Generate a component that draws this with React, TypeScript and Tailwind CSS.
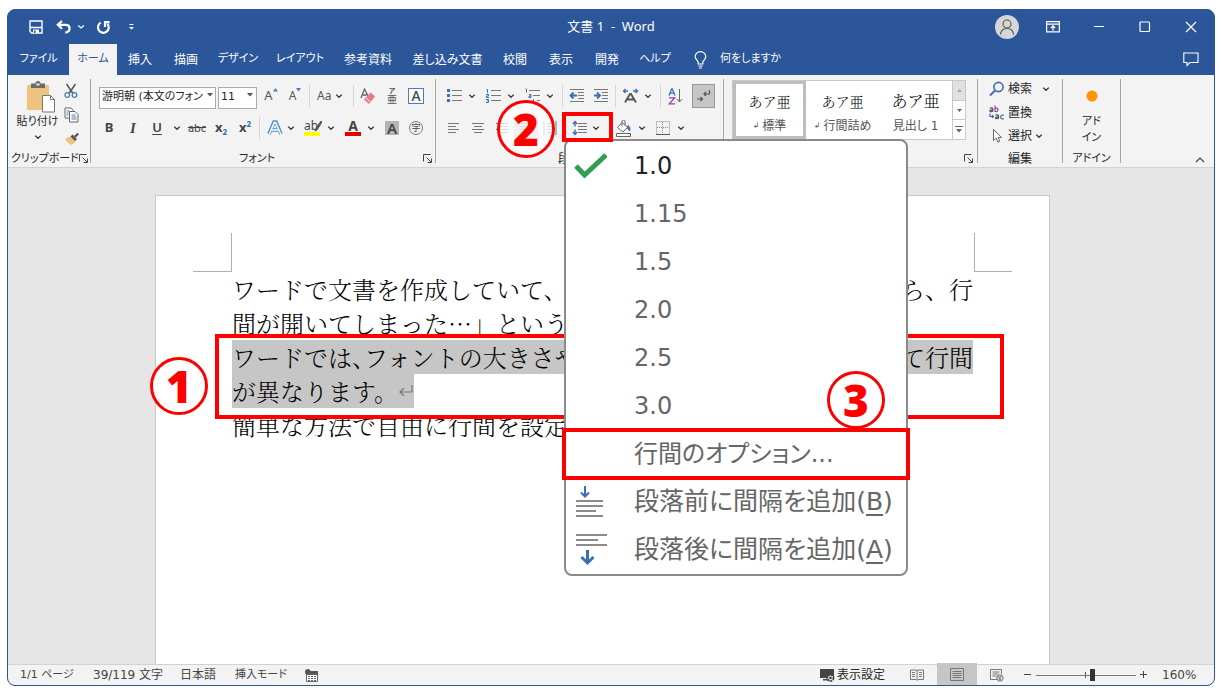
import type { ReactNode } from "react";

const UI = "font-['DejaVu_Sans','Noto_Sans_CJK_JP',sans-serif] [font-feature-settings:'palt']";
const TITLE = "font-['Noto_Sans','Noto_Sans_CJK_JP',sans-serif]";

const Chevron = () => (
  <svg width="8" height="8" viewBox="0 0 8 8" fill="none" stroke="#333" strokeWidth="1.3" className="shrink-0">
    <path d="M1.2 2.6 4 5.3 6.8 2.6" />
  </svg>
);

const Divider = () => <div className="mx-[2px] h-[22px] w-px shrink-0 bg-[#d5d5d5]" />;

const GroupLine = () => <div className="my-1 w-px shrink-0 bg-[#a6a6a6]" />;

type BtnProps = { label: string; className?: string; children: ReactNode };

const Tool = ({ label, className = "w-6", children }: BtnProps) => (
  <button type="button" aria-label={label} className={`flex h-6 shrink-0 items-center justify-center ${className}`}>
    {children}
  </button>
);

const Split = ({ label, className = "", children }: BtnProps) => (
  <button type="button" aria-label={label} className={`flex h-6 shrink-0 items-center ${className}`}>
    {children}
    <Chevron />
  </button>
);

const Launcher = ({ label }: { label: string }) => (
  <button type="button" aria-label={label} className="flex h-4 w-[10px] shrink-0 items-center justify-center">
    <svg width="10" height="10" viewBox="0 0 10 10" fill="none" stroke="#444" strokeWidth="1">
      <path d="M.5 7.5V.5h7M3.5 3.5l5 5M8.5 4.5v4h-4" />
    </svg>
  </button>
);

const Lines = ({ rows }: { rows: [number, number][] }) => (
  <svg width="14" height="14" viewBox="0 0 14 14" stroke="#777" strokeWidth="1">
    {rows.map(([a, b], i) => (
      <path key={i} d={`M${a} ${2.5 + i * 3}H${b}`} />
    ))}
  </svg>
);

const tabs: { name: string; w: string; on?: boolean }[] = [
  { name: "ファイル", w: "w-[61px] text-[11px]" },
  { name: "ホーム", w: "w-[48px] text-[11px]", on: true },
  { name: "挿入", w: "w-[46px] text-xs" },
  { name: "描画", w: "w-[46px] text-xs" },
  { name: "デザイン", w: "w-[58px] text-[11px]" },
  { name: "レイアウト", w: "w-[66px] text-[11px]" },
  { name: "参考資料", w: "w-[70px] text-xs" },
  { name: "差し込み文書", w: "w-[89px] text-xs" },
  { name: "校閲", w: "w-[46px] text-xs" },
  { name: "表示", w: "w-[46px] text-xs" },
  { name: "開発", w: "w-[46px] text-xs" },
  { name: "ヘルプ", w: "w-[50px] text-[11px]" },
];

function TitleBar() {
  return (
    <header className={`flex h-[34px] shrink-0 items-center text-[13px] text-white ${TITLE}`}>
      <div className="flex flex-1 items-center">
        <Tool label="上書き保存" className="ml-[18px] w-[20px]">
          <svg width="14" height="14" viewBox="0 0 14 14" fill="none" stroke="#fff" strokeWidth="1.4">
            <path d="M1 1h12v12H2.5L1 11.5z" />
            <path d="M1 7.5h12" />
            <path d="M4 9.5h6V13H4z" fill="#fff" stroke="none" />
            <path d="M5 10.5h1.5V13H5z" fill="#2b579a" stroke="none" />
          </svg>
        </Tool>
        <button type="button" aria-label="元に戻す" className="ml-[10px] flex h-6 items-center gap-[5px]">
          <svg width="16" height="14" viewBox="0 0 16 14" fill="none" stroke="#fff" strokeWidth="2.2">
            <path d="M6 1 1.8 4.8 6 8.8" />
            <path d="M2 4.8h8.2a3.6 3.6 0 0 1 3.4 3.6c0 2-1.6 3.6-4.4 4.2" />
          </svg>
          <svg width="8" height="8" viewBox="0 0 8 8" fill="none" stroke="#fff" strokeWidth="1.2">
            <path d="M1.2 2.5 4 5l2.8-2.5" />
          </svg>
        </button>
        <Tool label="繰り返し" className="ml-[8px] w-[20px]">
          <svg width="15" height="15" viewBox="0 0 15 15" fill="none" stroke="#fff" strokeWidth="2.2">
            <path d="M8 2.2H13.6" />
            <path d="M9 1v6" />
            <path d="M4.8 2.6a5.4 5.4 0 1 0 6.6 1.2" />
          </svg>
        </Tool>
        <Tool label="カスタマイズ" className="ml-[12px] w-[12px]">
          <svg width="7" height="8" viewBox="0 0 7 8" fill="#fff">
            <path d="M1.5 1h4v1h-4zM1 4h5L3.5 6.6z" />
          </svg>
        </Tool>
      </div>
      <h1 className="whitespace-pre">文書 1  -  Word</h1>
      <div className="flex flex-1 items-center justify-end">
        <Tool label="アカウント" className="w-[46px]">
          <svg width="24" height="24" viewBox="0 0 24 24" fill="none" stroke="#555" strokeWidth="1.1">
            <circle cx="12" cy="12" r="12" fill="#d6d6d6" stroke="none" />
            <circle cx="12" cy="9" r="4" />
            <path d="M5.5 19.5c.4-4 3-6 6.500-6s6.100 2 6.500 6" />
          </svg>
        </Tool>
        <Tool label="リボンの表示オプション" className="w-[46px]">
          <svg width="14" height="12" viewBox="0 0 14 12" fill="none" stroke="#fff" strokeWidth="1.2">
            <path d="M.6.6h12.800v10.300H.6zM.6 3.200h12.800M7 9.800V5M4.800 7 7 4.900 9.200 7" />
          </svg>
        </Tool>
        <Tool label="最小化" className="w-[46px]">
          <svg width="12" height="12" stroke="#fff"><path d="M1 5.500h10" /></svg>
        </Tool>
        <Tool label="最大化" className="w-[46px]">
          <svg width="12" height="12" fill="none" stroke="#fff" strokeWidth="1.2"><rect x="1" y="1" width="9.500" height="9.500" rx="1" /></svg>
        </Tool>
        <Tool label="閉じる" className="w-[46px]">
          <svg width="12" height="12" stroke="#fff" strokeWidth="1.2"><path d="m1 1 10 10M11 1 1 11" /></svg>
        </Tool>
      </div>
    </header>
  );
}

function TabBar() {
  return (
    <nav className="flex h-[31px] shrink-0 text-xs text-white">
      {tabs.map((t) => (
        <button
          key={t.name}
          type="button"
          className={`${t.w} shrink-0 whitespace-nowrap ${t.on ? "bg-[#f3f3f3] text-[#2b579a]" : ""}`}
        >
          {t.name}
        </button>
      ))}
      <button type="button" className="ml-[14px] flex shrink-0 items-center gap-[13px] whitespace-nowrap">
        <svg width="13" height="18" viewBox="0 0 13 18" fill="none" stroke="#fff" strokeWidth="1.2">
          <path d="M4.200 13v-1.500C4.200 9.500 1.200 8.500 1.200 5.600a5.300 5 0 0 1 10.600 0c0 2.900-3 3.900-3 5.900V13zM4.400 15h4.200M5 17h3" />
        </svg>
        <span className="text-[11px]">何をしますか</span>
      </button>
      <div className="flex-1" />
      <Tool label="コメント" className="w-[46px] self-center">
        <svg width="16" height="15" viewBox="0 0 16 15" fill="none" stroke="#fff" strokeWidth="1.1">
          <path d="M.8 1h14.200v9.500H7l-3 3v-3H.8z" />
        </svg>
      </Tool>
    </nav>
  );
}

function ClipboardGroup() {
  return (
    <section className="flex w-[82px] shrink-0 flex-col">
      <div className="flex h-[68px] pt-1 pl-[8px]">
        <button type="button" className="flex w-[43px] flex-col items-center pt-[2px] text-[11px] leading-4 whitespace-nowrap">
          <svg width="30" height="32" viewBox="0 0 30 32" className="ml-[6px]">
            <rect x="1" y="4" width="22" height="25" rx="1" fill="#ecc480" />
            <path d="M5 2.500h4.500a2.500 2.500 0 0 1 5 0H19V7H5z" fill="#6b6b6b" />
            <rect x="10.500" y="2.500" width="3" height="2" fill="#f3f3f3" />
            <path d="M16.500 14.500h8l4 4V31h-12z" fill="#fff" stroke="#777" />
            <path d="M24.500 14.500v4h4" fill="none" stroke="#777" />
          </svg>
          <span className="mt-[1px]">貼り付け</span>
          <span className="mt-[3px]"><Chevron /></span>
        </button>
        <div className="flex w-[24px] flex-col items-center">
          <Tool label="切り取り" className="w-6">
            <svg width="14" height="16" viewBox="0 0 14 16" fill="none">
              <path d="M2.500 1 9 10.500M11.500 1 5 10.500" stroke="#555" strokeWidth="1.500" />
              <circle cx="3.300" cy="12" r="2.300" stroke="#4a7ebb" strokeWidth="1.300" />
              <circle cx="10.500" cy="12" r="2.300" stroke="#4a7ebb" strokeWidth="1.300" />
            </svg>
          </Tool>
          <Tool label="コピー" className="w-6">
            <svg width="15" height="16" viewBox="0 0 15 16" fill="#fff" stroke="#666">
              <path d="M1 1h6l2.500 2.500V11H1z" />
              <path d="M5.500 4.500h5.500l3 3v7.500H5.500z" />
              <path d="M2.500 4h3M2.500 6h2M2.500 8h2M7.500 8h4M7.500 10h5M7.500 12h5" stroke="#4a7ebb" />
            </svg>
          </Tool>
          <Tool label="書式のコピー" className="w-6">
            <svg width="15" height="14" viewBox="0 0 15 14">
              <path d="m1 7 6-3 5 5-4 4C5 12 2.500 10 1 7z" fill="#ecc480" />
              <path d="M6.500 4.500 8.500 2.500 13 7l-2 2z" fill="#555" />
              <path d="m10 4 3.500-3.200L15 2.300 11.800 5.500z" fill="#555" />
            </svg>
          </Tool>
        </div>
      </div>
      <div className="flex h-6 items-start justify-between pt-2 pr-[2px] pl-[3px] text-[11px] leading-4 whitespace-nowrap">
        クリップボード
        <Launcher label="クリップボードの詳細" />
      </div>
    </section>
  );
}

function FontGroup() {
  return (
    <section className="flex w-[344px] shrink-0 flex-col pt-1">
      <div className="flex h-[34px] items-center pl-2">
        <div className="relative w-[117px]">
          <select aria-label="フォント名" className="h-[22px] w-full appearance-none border border-[#ababab] bg-white pr-[8px] pl-[2px] text-[11px]">
            <option>游明朝 (本文のフォン</option>
          </select>
          <svg width="6" height="4" className="pointer-events-none absolute top-[10px] right-[3px]"><path d="M0 0h6L3 3.500z" fill="#555" /></svg>
        </div>
        <div className="relative ml-[2px] w-[39px]">
          <select aria-label="フォント サイズ" className="h-[22px] w-full appearance-none border border-[#ababab] bg-white pl-[2px] text-[11px]">
            <option>11</option>
          </select>
          <svg width="6" height="4" className="pointer-events-none absolute top-[10px] right-[4px]"><path d="M0 0h6L3 3.500z" fill="#555" /></svg>
        </div>
        <div className="w-[2px]" />
        <Tool label="フォント サイズの拡大">
          <span className="font-['Noto_Sans'] text-[13px] text-[#555]">A</span>
          <svg width="5" height="4" className="mb-[12px]"><path d="M0 3.500h5L2.500 0z" fill="#4a7ebb" /></svg>
        </Tool>
        <Tool label="フォント サイズの縮小">
          <span className="font-['Noto_Sans'] text-xs text-[#555]">A</span>
          <svg width="5" height="4" className="mb-[12px]"><path d="M0 0h5L2.500 3.500z" fill="#4a7ebb" /></svg>
        </Tool>
        <Divider />
        <Split label="文字種の変換" className="w-[39px] gap-[4px] pl-[5px] font-['Noto_Sans'] text-xs text-[#555]">Aa</Split>
        <Divider />
        <Tool label="書式のクリア">
          <svg width="16" height="17" viewBox="0 0 16 17">
            <path d="M1 10 4.500 1 8 8M2.200 7h4.500" fill="none" stroke="#666" strokeWidth="1.300" />
            <path d="m10.500 4.500 4.500 4-6 7.500-5-4.500z" fill="#e8798c" />
            <path d="m5.500 9.500 5 4.500" stroke="#f3f3f3" />
          </svg>
        </Tool>
        <Tool label="ルビ">
          <span className="flex flex-col items-center text-[#555]">
            <span className="text-[7px] leading-[7px] font-bold">ア</span>
            <span className="text-[10px] leading-[10px]">亜</span>
          </span>
        </Tool>
        <Tool label="囲み線">
          <span className="flex h-4 w-4 items-center justify-center border border-[#4a7ebb] bg-white font-['Noto_Sans'] text-sm font-medium text-[#444]">A</span>
        </Tool>
      </div>
      <div className="flex h-[30px] items-center pl-[6px] font-['Noto_Sans','Noto_Sans_CJK_JP',sans-serif] text-[13px] text-[#444]">
        <Tool label="太字"><b>B</b></Tool>
        <Tool label="斜体"><i className="font-['Liberation_Serif'] text-[15px] font-bold">I</i></Tool>
        <Tool label="下線"><span className="font-semibold underline underline-offset-2">U</span></Tool>
        <Tool label="下線の種類" className="w-4"><Chevron /></Tool>
        <Tool label="取り消し線"><s className="text-[11px]">abc</s></Tool>
        <Tool label="下付き"><b>x</b><span className="mt-[8px] text-[8px] font-bold text-[#2e75b6]">2</span></Tool>
        <Tool label="上付き"><b>x</b><span className="mb-[8px] text-[8px] font-bold text-[#2e75b6]">2</span></Tool>
        <Divider />
        <Split label="文字の効果" className="w-[38px] gap-[4px] pl-[5px]">
          <svg width="16" height="16" viewBox="0 0 16 16">
            <path d="M2 14 7 2h2l5 12M4.500 10h7" fill="none" stroke="#4a90d9" strokeWidth="3.600" />
            <path d="M2.300 14 7.300 2.500h1.400l5 11.500M4.800 10h6.500" fill="none" stroke="#fff" strokeWidth="1.500" />
          </svg>
        </Split>
        <Split label="蛍光ペンの色" className="w-[40px] gap-[5px] pl-[4px]">
          <span className="flex w-[18px] flex-col">
            <span className="flex h-3 items-center text-xs leading-3 text-[#444]">
              ab
              <svg width="8" height="12" viewBox="0 0 8 12" className="-ml-[4px] shrink-0"><path d="m1 11 1-3L7 1l1 1-5 8z" fill="#555" stroke="#555" /></svg>
            </span>
            <span className="h-[4px] w-4 bg-[#ffff00]" />
          </span>
        </Split>
        <Split label="フォントの色" className="w-[40px] gap-[5px] pl-[4px]">
          <span className="flex w-[18px] flex-col items-center">
            <b className="h-3 text-[14px] leading-3">A</b>
            <span className="h-[4px] w-4 bg-[#e60000]" />
          </span>
        </Split>
        <Tool label="文字の網かけ"><span className="flex h-[14px] w-[14px] items-center justify-center bg-[#b5b5b5] text-[15px] font-semibold">A</span></Tool>
        <Tool label="囲い文字"><span className="flex h-[14px] w-[14px] items-center justify-center rounded-full border border-[#777] text-[9px]">字</span></Tool>
      </div>
      <div className="flex h-6 items-start pt-2 pr-[2px] text-[11px] leading-4">
        <span className="flex-1 text-center">フォント</span>
        <Launcher label="フォントの詳細" />
      </div>
    </section>
  );
}

function ParagraphGroup() {
  return (
    <section className="flex w-[287px] shrink-0 flex-col pt-1">
      <div className="flex h-[34px] items-center pl-[8px]">
        <Split label="箇条書き" className="w-[39px] gap-[5px] pl-[3px]">
          <svg width="16" height="16" viewBox="0 0 16 16">
            <path d="M5 2.500h10M5 7.500h10M5 12.500h10" stroke="#777" />
            <path d="M0 1h3v3H0zM0 6h3v3H0zM0 11h3v3H0z" fill="#3a70b2" />
          </svg>
        </Split>
        <Split label="段落番号" className="w-[39px] gap-[5px] pl-[3px]">
          <svg width="16" height="16" viewBox="0 0 16 16" fill="none">
            <path d="M5 2.500h10M5 7.500h10M5 12.500h10" stroke="#777" />
            <path d="M.5 1.500h1V5M0 6.500h2.500V8H.5v1.500H3M0 11.500h2.500v3H0M1 13h1" stroke="#3a70b2" />
          </svg>
        </Split>
        <Split label="アウトライン" className="w-[38px] gap-[5px] pl-[3px]">
          <svg width="16" height="16" viewBox="0 0 16 16" fill="none">
            <path d="M4 2.500h11M8 7.500h7M12 12.500h3" stroke="#777" />
            <path d="M.5 1h1v3.500M4 6.500h2v3H4V8h2M8.500 11v3.500" stroke="#3a70b2" />
          </svg>
        </Split>
        <Divider />
        <Tool label="インデントを減らす">
          <svg width="16" height="14" viewBox="0 0 16 14" fill="none">
            <path d="M1 .5h14M9 3.500h6M9 6.500h6M9 9.500h6M1 12.500h14" stroke="#777" />
            <path d="M8 6.500H2M4.500 3.500l-3 3 3 3" stroke="#3a70b2" strokeWidth="1.800" />
          </svg>
        </Tool>
        <Tool label="インデントを増やす">
          <svg width="16" height="14" viewBox="0 0 16 14" fill="none">
            <path d="M1 .5h14M9 3.500h6M9 6.500h6M9 9.500h6M1 12.500h14" stroke="#777" />
            <path d="M1 6.500h6M4 3.500l3 3-3 3" stroke="#3a70b2" strokeWidth="1.800" />
          </svg>
        </Tool>
        <Divider />
        <Split label="拡張書式" className="w-[40px] gap-[5px] pl-[4px]">
          <svg width="17" height="16" viewBox="0 0 17 16" fill="none">
            <path d="M3 14.500 8 6h1l5 8.500M5 11.500h7" stroke="#555" strokeWidth="1.800" />
            <path d="M6 3H1.500M3.500 1l-2 2 2 2M11 3h4.500M13.500 1l2 2-2 2" stroke="#3a70b2" strokeWidth="1.300" />
          </svg>
        </Split>
        <Divider />
        <Tool label="並べ替え">
          <span className="flex items-center">
            <svg width="8" height="17" viewBox="0 0 8 17" fill="none" strokeWidth="1.300">
              <path d="M1 7.500 3.700.8h.6L7 7.500M2 5.200h4" stroke="#3a70b2" />
              <path d="M1 9.800h5.800L1.200 15.800H7" stroke="#8e44ad" />
            </svg>
            <svg width="7" height="14" viewBox="0 0 7 14" fill="none" stroke="#666"><path d="M3.500 0v13M.8 10l2.700 3 2.700-3" /></svg>
          </span>
        </Tool>
        <Tool label="編集記号の表示" className="ml-[5px] w-[23px] border border-[#999] bg-[#c6c6c6]">
          <svg width="15" height="14" viewBox="0 0 15 14" fill="none" stroke="#555" strokeWidth="1.200">
            <path d="M13.500 1v4H8M10 3 8 5l2 2M1 10h5.500M4.500 8l2 2-2 2" />
          </svg>
        </Tool>
      </div>
      <div className="flex h-[30px] items-center pl-[6px]">
        <Tool label="左揃え"><Lines rows={[[1, 12], [1, 9], [1, 12], [1, 9]]} /></Tool>
        <Tool label="中央揃え"><Lines rows={[[1, 13], [3, 11], [1, 13], [3, 11]]} /></Tool>
        <Tool label="右揃え"><Lines rows={[[1, 13], [5, 13], [1, 13], [5, 13]]} /></Tool>
        <Tool label="両端揃え" className="w-6 bg-[#c6c6c6]"><Lines rows={[[1, 13], [1, 13], [1, 13], [1, 13]]} /></Tool>
        <Tool label="均等割り付け">
          <svg width="14" height="16" viewBox="0 0 14 16" stroke="#4a7ebb" fill="none">
            <path d="M1 1v14M13 1v14" /><path d="M4 3.500h7M4 6.500h7M4 9.500h7M4 12.500h7" stroke="#777" />
          </svg>
        </Tool>
        <Split label="行と段落の間隔" className="w-[46px] gap-[4px] pl-[10px]">
          <svg width="16" height="16" viewBox="0 0 16 16" fill="none">
            <path d="M6 3.500h9M6 6.500h9M6 9.500h9M6 12.500h9" stroke="#777" />
            <path d="M3 1.500v5M3 9.500v5M.8 4 3 1.500 5.200 4M.8 12 3 14.500 5.200 12" stroke="#3a70b2" strokeWidth="1.400" />
          </svg>
        </Split>
        <Split label="塗りつぶし" className="w-[40px] gap-[5px] pl-[7px]">
          <svg width="18" height="17" viewBox="0 0 18 17" fill="none" stroke="#666">
            <path d="m7 2.500 5.500 5L8 12 2.500 7.500z" fill="#fff" /><path d="M7 6V1.500a1.500 1.500 0 0 1 3 0V5" />
            <path d="M13 5.500c2 1.500 2.500 3 1.500 5.500l-2-3z" fill="#3a70b2" stroke="#3a70b2" />
            <path d="M1.500 13.500h14v3h-14z" fill="#fff" />
          </svg>
        </Split>
        <Split label="罫線" className="w-[40px] gap-[7px] pl-[8px]">
          <svg width="14" height="14" viewBox="0 0 14 14" fill="none" stroke="#888" strokeDasharray="1 1">
            <path d="M.5.5h13v13H.5zM6.500 1v12M1 6.500h12" /><path d="M0 13.500h14" stroke="#555" strokeDasharray="none" />
          </svg>
        </Split>
      </div>
      <div className="h-6 pt-2 pl-[122px] text-xs leading-4">段落</div>
    </section>
  );
}

function StylesGroup() {
  return (
    <section className="flex w-[253px] shrink-0 flex-col pt-[5px]">
      <div className="ml-2 flex h-[60px] w-[234px] border border-[#c8c8c8] bg-white whitespace-nowrap text-[#555]">
        {[
          { name: "標準", mark: "↲", on: true, cls: "text-[14px]" },
          { name: "行間詰め", mark: "↲", on: false, cls: "text-[14px]" },
          { name: "見出し 1", mark: "", on: false, cls: "text-[16px]" },
        ].map((s) => (
          <button
            key={s.name}
            type="button"
            className={`flex w-[73px] shrink-0 flex-col items-center justify-center gap-[7px] border-3 pt-1 ${s.on ? "border-[#bdbdbd]" : "border-transparent"}`}
          >
            <span className={`h-5 leading-5 font-light text-black font-['Noto_Serif_CJK_JP','Noto_Sans_CJK_JP',serif] [font-feature-settings:normal] ${s.cls}`}>あア亜</span>
            <span className="flex items-center gap-[3px] text-xs leading-4">
              {s.mark && <span className="text-[8px]">{s.mark}</span>}
              {s.name}
            </span>
          </button>
        ))}
        <div className="flex flex-1 flex-col border-l border-[#c8c8c8]">
          <button type="button" aria-label="前のスタイル" className="flex flex-1 items-center justify-center bg-[#e1e1e1]">
            <svg width="5" height="3"><path d="M0 3h5L2.500 0z" fill="#aaa" /></svg>
          </button>
          <button type="button" aria-label="次のスタイル" className="flex flex-1 items-center justify-center border-y border-[#c8c8c8]">
            <svg width="5" height="3"><path d="M0 0h5L2.500 3z" fill="#666" /></svg>
          </button>
          <button type="button" aria-label="その他のスタイル" className="flex flex-1 items-center justify-center">
            <svg width="8" height="7"><path d="M0 0h8v1H0zM1 3h6L4 6.500z" fill="#666" /></svg>
          </button>
        </div>
      </div>
      <div className="mt-[3px] flex h-6 justify-end pt-2 pr-[3px]">
        <Launcher label="スタイルの詳細" />
      </div>
    </section>
  );
}

function EditingGroup() {
  return (
    <section className="flex w-[84px] shrink-0 flex-col pt-[2px] text-xs">
      <button type="button" className="flex h-6 items-center gap-[3px] pl-[11px] leading-4">
        <svg width="16" height="16" viewBox="0 0 16 16" fill="none" stroke="#3a70b2" strokeWidth="1.600">
          <circle cx="9.500" cy="6" r="4.600" /><path d="M6 9.500 1 14.500" strokeWidth="2" />
        </svg>
        検索
        <span className="ml-[7px]"><Chevron /></span>
      </button>
      <button type="button" className="flex h-6 items-center gap-[3px] pl-[11px] leading-4">
        <svg width="16" height="16" viewBox="0 0 16 16" fill="none" strokeWidth="1.200">
          <path d="M.8 3.300c1-.7 3-.5 3 .8v2.700M3.800 5C2 4.800.8 5 .8 6s2 1 3-.3" stroke="#555" />
          <path d="M6 .5v6.300M6 4c.5-1.300 3-1.300 3 .8S6.500 7.200 6 6" stroke="#8e44ad" />
          <path d="M1 8.500v3h3M3 10l1.500 1.500L3 13" stroke="#3a70b2" />
          <path d="M6.500 10.300c1-.7 3-.5 3 .8v2.700M9.500 12c-1.800-.2-3 0-3 1s2 1 3-.3" stroke="#555" />
          <path d="M14.800 10.400c-1.200-.8-3.200-.2-3.200 1.600s2 2.400 3.200 1.500" stroke="#3a70b2" />
        </svg>
        置換
      </button>
      <button type="button" className="flex h-[22px] items-center gap-[3px] pl-[11px] leading-4">
        <svg width="16" height="16" viewBox="0 0 16 16" fill="#fff" stroke="#666">
          <path d="M4.500 1.500v11l2.600-2.400 1.700 4 2-.9-1.700-3.800h3.400z" />
        </svg>
        選択
        <Chevron />
      </button>
      <div className="pt-1 text-center leading-4">編集</div>
    </section>
  );
}

function AddInGroup() {
  return (
    <section className="flex w-[57px] shrink-0 flex-col text-[11px]">
      <button type="button" className="flex h-[76px] flex-col items-center pt-[15px] leading-4">
        <svg width="12" height="12"><circle cx="6" cy="6" r="5.500" fill="#ff9208" /></svg>
        <span className="mt-[12px]">アド</span>
        <span>イン</span>
      </button>
      <div className="text-center leading-4">アドイン</div>
    </section>
  );
}

function Ribbon() {
  return (
    <div className="flex h-[93px] shrink-0 border-b border-[#d2d2d2] bg-[#f3f3f3] text-[#262626]">
      <ClipboardGroup />
      <GroupLine />
      <FontGroup />
      <GroupLine />
      <ParagraphGroup />
      <GroupLine />
      <StylesGroup />
      <GroupLine />
      <EditingGroup />
      <GroupLine />
      <AddInGroup />
      <GroupLine />
      <div className="flex flex-1 items-end justify-end pr-[8px]">
        <Tool label="リボンを折りたたむ" className="w-3">
          <svg width="10" height="8" fill="none" stroke="#444" strokeWidth="1.200" className="mt-[10px]"><path d="M1 6 5 2l4 4" /></svg>
        </Tool>
      </div>
    </div>
  );
}

function Document() {
  return (
    <main className="flex min-h-0 flex-1 justify-center overflow-hidden bg-[#e6e6e6] pt-[27px] pr-[17px]">
      <article className="w-[895px] border border-b-0 border-[#c8c8c8] bg-white pt-[37px]">
        <div className="flex justify-between px-[37px]">
          <div className="h-[39px] w-[39px] border-r border-b border-[#b0b0b0]" />
          <div className="h-[39px] w-[38px] border-b border-l border-[#b0b0b0]" />
        </div>
        <div className="px-[76px] font-['Noto_Serif_CJK_JP','Noto_Sans_CJK_JP',serif] text-2xl leading-[34px] font-light [font-feature-settings:normal] whitespace-nowrap text-black">
          <p className="flex justify-between"><span>ワードで文書を作成していて、</span><span>ら、行</span></p>
          <p>間が開いてしまった…」という経</p>
          <p className="flex justify-between bg-[#c6c6c6]">
            <span>ワードでは<span className="[font-feature-settings:'halt']">、</span>フォントの大きさや</span>
            <span>て行間</span>
          </p>
          <p>
            <span className="inline-flex h-[34px] items-center bg-[#c6c6c6]">
              が異なります。
              <svg width="16" height="14" viewBox="0 0 16 14" fill="none" stroke="#777" strokeWidth="1.200"><path d="M14 1v7H2M6 4 2 8l4 4" /></svg>
            </span>
          </p>
          <p>簡単な方法で自由に行間を設定す</p>
        </div>
      </article>
    </main>
  );
}

function StatusBar() {
  return (
    <footer className="flex h-[21px] shrink-0 items-center border-t border-[#d2d2d2] bg-[#f3f3f3] text-xs whitespace-nowrap text-[#444]">
      <span className="w-[85px] pl-[12px] text-[11px]">1/1 ページ</span>
      <span className="w-[87px]">39/119 文字</span>
      <span className="w-[55px]">日本語</span>
      <span className="w-[68px] text-[11px]">挿入モード</span>
      <Tool label="マクロの記録" className="w-4">
        <svg width="13" height="13" viewBox="0 0 13 13">
          <path d="M1.500 2.500h11v10h-11zM2 5.500h10" fill="#fff" stroke="#666" />
          <path d="M5 2h8v3H5z" fill="#555" /><circle cx="2.800" cy="2.800" r="2.800" fill="#555" />
          <path d="M3 7.500h8M3 9.500h8M3 11.500h8" stroke="#666" strokeDasharray="2 1" />
        </svg>
      </Tool>
      <div className="flex-1" />
      <button type="button" className="flex items-center gap-px text-[#262626]">
        <svg width="17" height="15" viewBox="0 0 17 15">
          <path d="M1 1h14v9H1zM4 11h5v1.500H4z" fill="#444" />
          <circle cx="11.500" cy="10" r="3" fill="#f3f3f3" stroke="#444" strokeWidth="1.800" strokeDasharray="2 .8" />
          <circle cx="11.500" cy="10" r="1.300" fill="#444" />
        </svg>
        表示設定
      </button>
      <Tool label="閲覧モード" className="ml-[12px] w-[40px]">
        <svg width="14" height="12" viewBox="0 0 14 12" fill="none" stroke="#777">
          <path d="M.5 1h5.500l1 1 1-1h5.500v9.500H8l-1 1-1-1H.5zM7 2v9M2 3.500h3M2 5.500h3M2 7.500h3M9 3.500h3M9 5.500h3M9 7.500h3" />
        </svg>
      </Tool>
      <Tool label="印刷レイアウト" className="h-5 w-[40px] bg-[#c6c6c6]">
        <svg width="14" height="14" fill="none" stroke="#777"><path d="M.5.5h13v12H.5zM2.500 3.500h9M2.500 5.500h9M2.500 7.500h9M2.500 9.500h9" /></svg>
      </Tool>
      <Tool label="Web レイアウト" className="w-[40px]">
        <svg width="14" height="13" viewBox="0 0 14 13" fill="none" stroke="#777">
          <path d="M7 10.500H.5V.5h11V5M2.500 3h7M2.500 5h6M2.500 7h4" /><circle cx="10" cy="9" r="3.200" fill="#ddd" /><path d="m8 7 3 4M9 11l2-4" />
        </svg>
      </Tool>
      <Tool label="縮小" className="ml-[3px] w-4"><svg width="8" height="8"><path d="M0 3.500h7" stroke="#444" /></svg></Tool>
      <div className="relative flex w-[100px] items-center">
        <div className="absolute left-[49px] h-[6px] w-px bg-[#555]" />
        <input
          type="range"
          aria-label="ズーム"
          min={0}
          max={100}
          defaultValue={57}
          className="relative h-3 w-full appearance-none bg-transparent [&::-webkit-slider-runnable-track]:h-px [&::-webkit-slider-runnable-track]:bg-[#777] [&::-webkit-slider-thumb]:-mt-[6px] [&::-webkit-slider-thumb]:h-3 [&::-webkit-slider-thumb]:w-[5px] [&::-webkit-slider-thumb]:appearance-none [&::-webkit-slider-thumb]:bg-[#333]"
        />
      </div>
      <Tool label="拡大" className="w-4"><svg width="8" height="8"><path d="M0 3.500h7M3.500 0v7" stroke="#444" /></svg></Tool>
      <span className="w-[62px] pl-[10px]">160%</span>
    </footer>
  );
}

const menuItems: { text: string; key?: string; icon?: ReactNode; on?: boolean }[] = [
  {
    text: "1.0",
    on: true,
    icon: <svg width="34" height="28" viewBox="0 0 34 28" fill="none" stroke="#2f9e50" strokeWidth="5"><path d="m3 14 8.500 9L33 3" /></svg>,
  },
  { text: "1.15" },
  { text: "1.5" },
  { text: "2.0" },
  { text: "2.5" },
  { text: "3.0" },
  { text: "行間のオプション..." },
  {
    text: "段落前に間隔を追加",
    key: "B",
    icon: (
      <svg width="32" height="32" viewBox="0 0 32 32" fill="none">
        <path d="M3 15h27M3 20h27M3 25h20M3 30h27" stroke="#666" strokeWidth="1.700" />
        <path d="M12 0v10M8 6.500l4 4 4-4" stroke="#3a70b2" strokeWidth="2" />
      </svg>
    ),
  },
  {
    text: "段落後に間隔を追加",
    key: "A",
    icon: (
      <svg width="34" height="32" viewBox="0 0 34 32" fill="none">
        <path d="M3 1h31M3 6h22M3 11h31" stroke="#666" strokeWidth="1.700" />
        <path d="M14.500 16v13M8.500 23l6 6 6-6" stroke="#3a70b2" strokeWidth="3" />
      </svg>
    ),
  },
];

function SpacingMenu() {
  return (
    <div role="menu" className="absolute top-[129px] left-[556px] w-[344px] rounded-lg border-2 border-[#8a8a8a] bg-white pt-px">
      {menuItems.map((m) => (
        <button
          key={m.text}
          type="button"
          role="menuitem"
          className={`flex h-12 w-full items-center text-left whitespace-nowrap ${m.key ? "text-[25px]" : "text-2xl"} ${m.on ? "text-[#222]" : "text-[#666]"}`}
        >
          <span className="flex w-[68px] shrink-0 pl-[7px]">{m.icon}</span>
          <span>{m.text}{m.key && <>(<u className="decoration-2 underline-offset-4">{m.key}</u>)</>}</span>
        </button>
      ))}
    </div>
  );
}

const Step = ({ n, className }: { n: number; className: string }) => (
  <div
    className={`absolute flex h-[58px] w-[58px] items-center justify-center rounded-full border-3 border-[#f00] font-['Open_Sans','Noto_Sans_CJK_JP',sans-serif] text-[44px] leading-none font-extrabold text-[#f00] ${className}`}
  >
    {n}
  </div>
);

export default function App() {
  return (
    <div className={`h-screen bg-white px-[7px] py-[9px] ${UI}`}>
      <div className="relative flex h-full flex-col overflow-hidden rounded-[8px] border border-[#2b579a] bg-[#2b579a]">
        <TitleBar />
        <TabBar />
        <Ribbon />
        <Document />
        <StatusBar />
        <div className="absolute top-[324px] left-[207px] h-[85px] w-[789px] border-4 border-[#f00]" />
        <Step n={1} className="top-[347px] left-[142px] bg-white" />
        <Step n={2} className="top-[90px] left-[489px] bg-white/75" />
        <SpacingMenu />
        <div className="absolute top-[102px] left-[554px] h-[30px] w-[51px] border-4 border-[#f00]" />
        <div className="absolute top-[418px] left-[554px] h-[52px] w-[348px] border-4 border-[#f00]" />
        <Step n={3} className="top-[361px] left-[819px] bg-white" />
      </div>
    </div>
  );
}
